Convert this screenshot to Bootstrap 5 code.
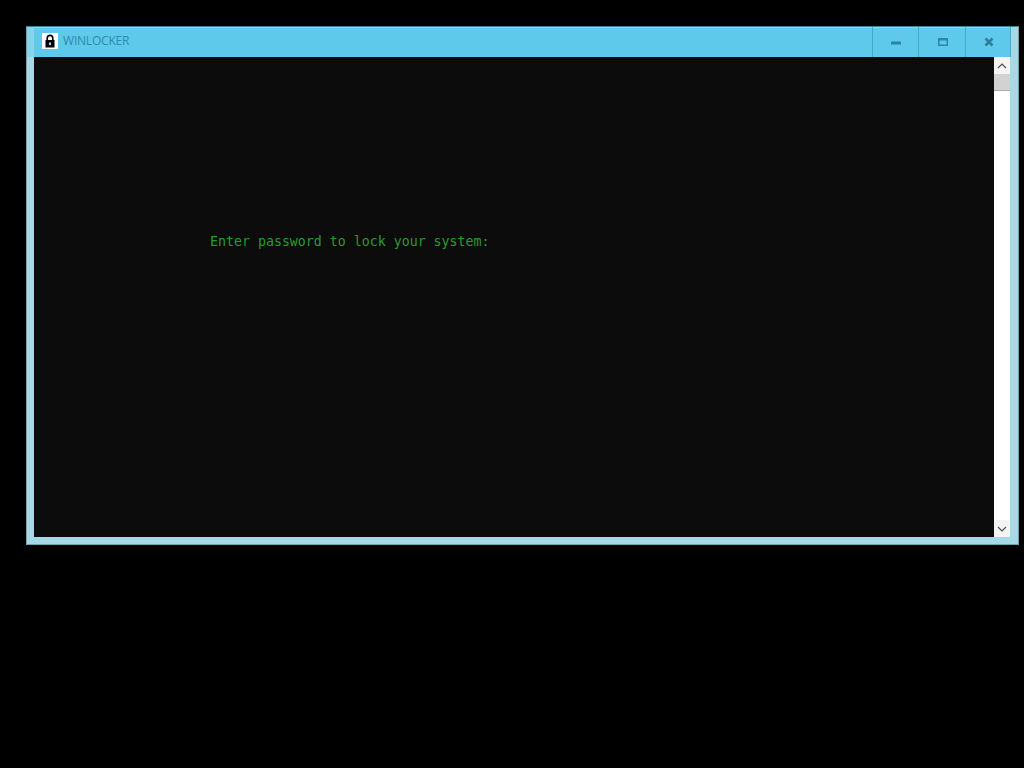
<!DOCTYPE html>
<html lang="en">
<head>
<meta charset="utf-8">
<title>WINLOCKER</title>
<link href="https://cdn.jsdelivr.net/npm/bootstrap@5.3.0/dist/css/bootstrap.min.css" rel="stylesheet">
<style>
html, body { height: 100%; background: #000; overflow: hidden; }
.desk { padding: 26px 5px 0 26px; }
.win { width: 993px; height: 519px; background: #a6d8e6; border: 1px solid #6f9fb0; border-top-color: #3f7f96; }
.tbar { height: 30px; margin-right: 7px; background: #5fc9ec; box-shadow: inset 7px 0 0 #86d3ea, inset 0 1px 0 #8fd8ee; }
.lockbox { width: 16px; height: 16px; background: #fff; margin-left: 15px; margin-top: 6px; }
.wtitle { font: 12px/1 "Open Sans", "Liberation Sans", sans-serif; color: #2b8cab; margin-left: 5px; margin-top: 8px; letter-spacing: -0.2px; }
.capbtn { width: 46.5px; height: 30px; padding-left: 2px; border-left: 1px solid #4aa9c9; }
.capbtn:last-child { border-right: 1px solid #4aa9c9; }
.wbody { margin: 0 8px 0 7px; height: 480px; }
.term { background: #0c0c0c; padding-top: 176px; padding-left: 176px; }
.prompt { font: 13.28px/18px "DejaVu Sans Mono", monospace; color: #2b9a2b; white-space: pre; }
.sbar { width: 16px; background: #fff; }
.sarrow { height: 17px; background: #f4f4f4; }
.sthumb { height: 17px; background: #d2d2d2; border-bottom: 1px solid #a9a9a9; }
</style>
</head>
<body>
<div class="desk">
  <div class="win d-flex flex-column">
    <div class="tbar d-flex">
      <div class="lockbox d-flex align-items-center justify-content-center">
        <svg width="12" height="14" viewBox="0 0 12 14"><path d="M3.2 6V4.2a2.8 2.8 0 0 1 5.6 0V6" fill="none" stroke="#000" stroke-width="1.6"/><rect x="1.5" y="6" width="9" height="7.5" fill="#000"/><rect x="5.2" y="8.5" width="1.6" height="2.6" fill="#fff"/></svg>
      </div>
      <div class="wtitle flex-grow-1">WINLOCKER</div>
      <div class="capbtn d-flex align-items-center justify-content-center">
        <svg width="12" height="6" viewBox="0 0 12 6"><rect x="1" y="2.5" width="10" height="3" fill="#2a86a6"/></svg>
      </div>
      <div class="capbtn d-flex align-items-center justify-content-center">
        <svg width="12" height="10" viewBox="0 0 12 10"><rect x="1.75" y="1.75" width="8.5" height="6.5" fill="none" stroke="#2a86a6" stroke-width="1.5"/><rect x="1" y="1" width="10" height="2.5" fill="#2a86a6"/></svg>
      </div>
      <div class="capbtn d-flex align-items-center justify-content-center">
        <svg width="10" height="10" viewBox="0 0 10 10"><path d="M1.5 1.5L8.5 8.5M8.5 1.5L1.5 8.5" stroke="#2a7f9e" stroke-width="2.6" fill="none"/></svg>
      </div>
    </div>
    <div class="wbody d-flex">
      <div class="term flex-grow-1"><div class="prompt">Enter password to lock your system:</div></div>
      <div class="sbar d-flex flex-column">
        <div class="sarrow d-flex align-items-center justify-content-center"><svg width="10" height="6" viewBox="0 0 10 6"><path d="M1 5L5 1L9 5" fill="none" stroke="#505050" stroke-width="1.2"/></svg></div>
        <div class="sthumb"></div>
        <div class="flex-grow-1"></div>
        <div class="sarrow d-flex align-items-center justify-content-center"><svg width="10" height="6" viewBox="0 0 10 6"><path d="M1 1L5 5L9 1" fill="none" stroke="#505050" stroke-width="1.2"/></svg></div>
      </div>
    </div>
  </div>
</div>
<script src="https://cdn.jsdelivr.net/npm/bootstrap@5.3.0/dist/js/bootstrap.bundle.min.js"></script>
</body>
</html>
